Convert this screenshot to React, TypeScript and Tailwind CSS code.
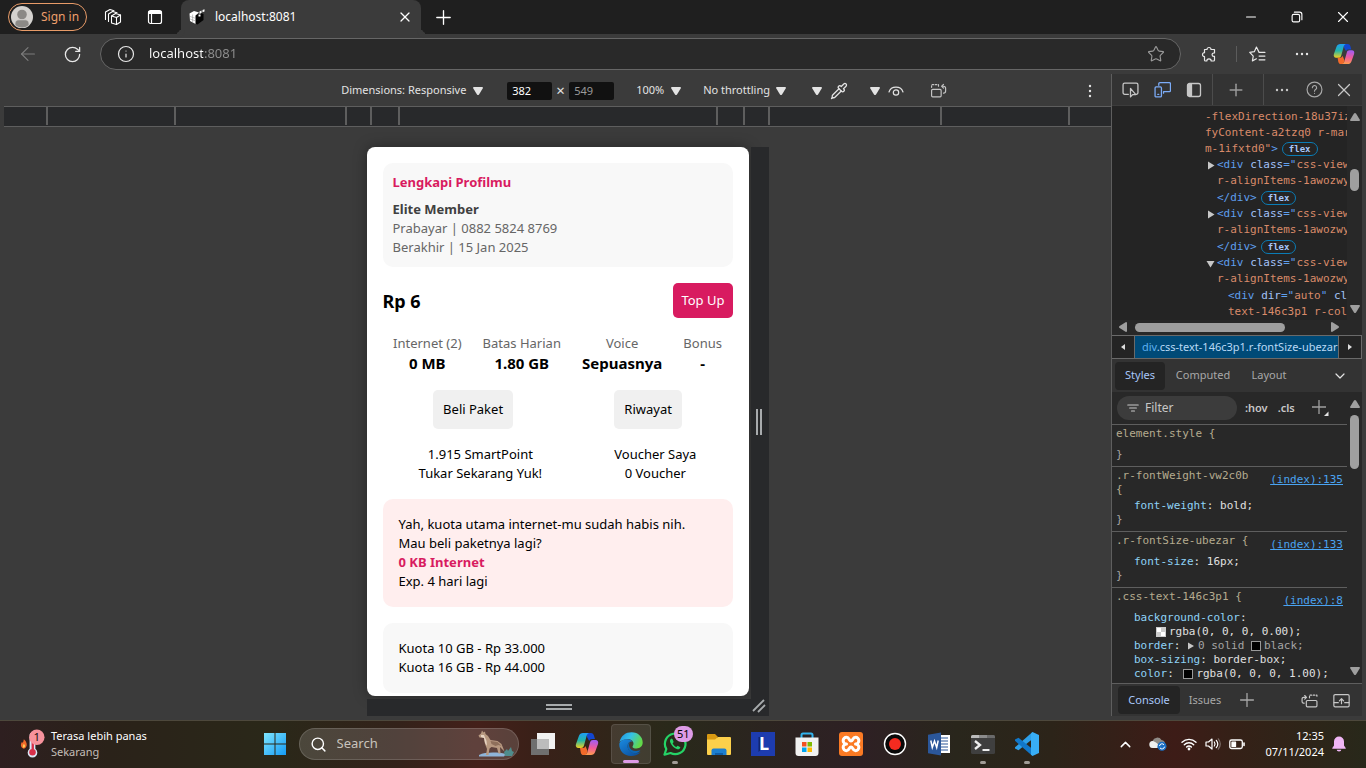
import type { ReactNode } from "react";
import { ArrowLeft, ChevronDown, ChevronUp, Info, Pipette, Plus, RotateCw, Search, Star, X } from "lucide-react";

type IconProps = { className?: string };

function Stroke({ children, className = "size-4", width = 1.2 }: { children: ReactNode; className?: string; width?: number }) {
  return (
    <svg viewBox="0 0 16 16" className={className} fill="none" stroke="currentColor" strokeWidth={width} strokeLinecap="round" strokeLinejoin="round" aria-hidden="true">
      {children}
    </svg>
  );
}

function Triangle({ className = "" }: IconProps) {
  return (
    <svg viewBox="0 0 10 8" className={`h-2 w-[10px] shrink-0 ${className}`} fill="currentColor" aria-hidden="true">
      <path d="M0 1Q0 0 1 0h8q1 0 1 1L6 7.400Q5 8.600 4 7.400Z" />
    </svg>
  );
}

function Dots({ className = "" }: IconProps) {
  return (
    <svg viewBox="0 0 16 16" className={`size-4 ${className}`} fill="currentColor" aria-hidden="true">
      <circle cx="3" cy="8" r="1.200" />
      <circle cx="8" cy="8" r="1.200" />
      <circle cx="13" cy="8" r="1.200" />
    </svg>
  );
}

function IconButton({ label, className = "", children }: { label: string; className?: string; children: ReactNode }) {
  return (
    <button type="button" aria-label={label} className={`flex shrink-0 items-center justify-center ${className}`}>
      {children}
    </button>
  );
}

function Copilot({ id, className = "size-6" }: { id: string; className?: string }) {
  return (
    <svg viewBox="0 0 24 24" className={className} aria-hidden="true">
      <defs>
        <linearGradient id={`${id}-a`} x1="0" y1="0" x2="0" y2="1">
          <stop offset="0" stopColor="#1f9df5" />
          <stop offset="0.500" stopColor="#23b6a8" />
          <stop offset="1" stopColor="#f0d020" />
        </linearGradient>
        <linearGradient id={`${id}-b`} x1="0.300" y1="0" x2="0.200" y2="1">
          <stop offset="0" stopColor="#a45cf0" />
          <stop offset="0.500" stopColor="#f05a9a" />
          <stop offset="1" stopColor="#ffa04a" />
        </linearGradient>
      </defs>
      <path d="M12 1h4c1.600 0 2.500 1 2.900 2.400L20 7h-3c-1.500 0-2.300.700-2.800 2.100L12 5Z" fill="#1246d0" />
      <path d="M8 1h6c-1.300.500-1.900 1.400-2.400 3L9 13.500C8.500 15.200 7.600 16 6 16H3.500C1.200 16 .300 14.300 1 12L3.800 4.200C4.600 2 6 1 8 1Z" fill={`url(#${id}-a)`} />
      <path d="M5 16h3c1.500 0 2-.800 2.500-2l2 5-1.200 4H8.500c-1.400 0-2.300-.900-2.700-2.300Z" fill="#f26a2a" />
      <path d="M16 23h-6c1.300-.500 2-1.400 2.400-3L15 10.500C15.500 8.800 16.400 8 18 8h2.500c2.300 0 3.200 1.700 2.500 4l-2.800 7.800C19.400 22 18 23 16 23Z" fill={`url(#${id}-b)`} />
    </svg>
  );
}

function ExpoCube() {
  return (
    <svg viewBox="0 0 16 16" className="size-4" aria-hidden="true">
      <path d="M5.500 6.500 12 4l2.500 1v6l-6 4.500-3-1Z" fill="#050505" />
      <path d="M.500 4.500 5 2l5 1.500-3.500 3v8.500L1 12Z" fill="#fff" />
      <path d="M1 7.500l5.500 1.800M1 10l5.500 1.900M3.600 5.500v8" stroke="#8a8a8a" strokeWidth="0.500" />
      <path d="M10.500 2.500 12.500 1.500v2.500L10.500 5ZM13.500 1l2-.700v2.200l-2 .700ZM9.500 5.500h2v2h-2Z" fill="#fff" />
    </svg>
  );
}

function TitleBar() {
  return (
    <header className="flex h-[34px] shrink-0 items-stretch bg-[#1f1f1f] pl-2 text-white">
      <button type="button" className="flex h-7 w-[79px] shrink-0 items-center gap-2 self-center rounded-full border border-[#e89b68] pl-[2px] text-[12px] text-[#ee9f6c]">
        <svg viewBox="0 0 22 22" className="size-[22px]" aria-hidden="true">
          <circle cx="11" cy="11" r="11" fill="#d4d2cf" />
          <circle cx="11" cy="8.500" r="4.800" fill="#8b8986" />
          <path d="M4 19.400C3.500 15 6 13.800 8 13.800h6c2 0 4.500 1.200 4 5.600a11 11 0 0 1-14 0Z" fill="#8b8986" stroke="#d4d2cf" strokeWidth="0.800" />
        </svg>
        Sign in
      </button>
      <IconButton label="Workspaces" className="ml-[5px] w-[42px]">
        <svg viewBox="0 0 18 18" className="size-[18px]" fill="none" stroke="currentColor" strokeWidth="1.100" strokeLinejoin="round" strokeLinecap="round" aria-hidden="true">
          <path d="m7.500 8 4-2.500 5 1.500v7l-4 2.500-5-1.500Z" />
          <path d="M7.500 8l5 1.500 4-2.500M12.500 9.500v7M4.500 13.500V6l4-2.500 4.500 1.300M1.500 11.500V4L6 1.500l4 1.200" />
        </svg>
      </IconButton>
      <IconButton label="Tab actions menu" className="w-[42px]">
        <svg viewBox="0 0 16 16" className="size-4" fill="none" stroke="currentColor" aria-hidden="true">
          <rect x="1.500" y="1.500" width="13" height="13" rx="2" strokeWidth="1.200" />
          <path d="M1.500 3.500h13" strokeWidth="3" />
          <path d="M4.500 4v10.500" strokeWidth="1.200" />
        </svg>
      </IconButton>
      <div className="relative ml-[5px] flex w-60 items-center rounded-t-lg bg-[#3b3b3b] px-2 text-[12px]">
        <span className="absolute bottom-0 -left-2 size-2 rounded-br-lg shadow-[4px_4px_0_0_#3b3b3b]" />
        <span className="absolute -right-2 bottom-0 size-2 rounded-bl-lg shadow-[-4px_4px_0_0_#3b3b3b]" />
        <ExpoCube />
        <span className="ml-[10px] flex-1">localhost:8081</span>
        <IconButton label="Close tab" className="size-4">
          <X size={16} strokeWidth={1.8} />
        </IconButton>
      </div>
      <IconButton label="New tab" className="w-11">
        <Plus size={23} strokeWidth={1.4} />
      </IconButton>
      <div className="flex-1" />
      <IconButton label="Minimize" className="w-[46px]">
        <Stroke className="size-3" width={1.4}><path d="M2 8h12" /></Stroke>
      </IconButton>
      <IconButton label="Restore" className="w-[46px]">
        <Stroke className="size-3" width={1.5}>
          <rect x="1.500" y="4.500" width="10" height="10" rx="2" />
          <path d="M4.500 1.500h7a3 3 0 0 1 3 3v7" />
        </Stroke>
      </IconButton>
      <IconButton label="Close window" className="w-[46px]">
        <Stroke className="size-3" width={1.5}><path d="m2 2 12 12M14 2 2 14" /></Stroke>
      </IconButton>
    </header>
  );
}

function AddressRow() {
  return (
    <div className="flex h-10 shrink-0 items-center bg-[#3b3b3b] pl-[6px] text-[#e8e8e8]">
      <IconButton label="Back" className="w-11 text-[#7d7d7d]">
        <ArrowLeft size={22} strokeWidth={1.2} />
      </IconButton>
      <IconButton label="Refresh" className="w-11">
        <RotateCw size={19} strokeWidth={1.6} />
      </IconButton>
      <div className="ml-[6px] flex h-8 flex-1 items-center rounded-full border border-[#666] bg-[#292929] pr-[15px] pl-4">
        <Info size={18} strokeWidth={1.6} />
        <input
          aria-label="Address"
          defaultValue="localhost:8081"
          className="ml-[14px] min-w-0 flex-1 bg-[linear-gradient(90deg,#ffffff_54px,#8f8f8f_54px)] bg-clip-text text-[13px] text-transparent outline-none"
        />
        <IconButton label="Add to favorites" className="text-[#9a9a9a]">
          <Star size={18} strokeWidth={1.5} />
        </IconButton>
      </div>
      <IconButton label="Extensions" className="ml-2 w-10">
        <Stroke className="size-4">
          <path d="M3.500 3.500H6a2 2 0 1 1 4 0h3.500V7h-.700a1.700 1.700 0 0 0 0 3.400h.700V14a1 1 0 0 1-1 1H10.200a2.200 2.200 0 0 0-4.400 0H4.500a1 1 0 0 1-1-1v-3.300a2 2 0 1 1 0-4Z" />
        </Stroke>
      </IconButton>
      <span className="mr-[5px] ml-[7px] h-4 w-px bg-[#5c5c5c]" />
      <IconButton label="Favorites" className="w-[30px]">
        <Stroke className="size-[17px]" width={1.1}>
          <path d="M9.500 6 7 1 5 5.300.700 6 4 9.500 3.200 14 7 12M9.500 6H15M9.500 9.500H15M9.500 13H15" />
        </Stroke>
      </IconButton>
      <IconButton label="Settings and more" className="w-[60px]"><Dots /></IconButton>
      <IconButton label="Copilot" className="mr-[10px] w-6"><Copilot id="bar" className="size-[22px]" /></IconButton>
    </div>
  );
}

function MiniSelect({ label, value }: { label: string; value: string }) {
  return (
    <label className="flex items-center gap-[6px]">
      <select aria-label={label} className="appearance-none bg-transparent text-[#e3e3e3] outline-none">
        <option>{value}</option>
      </select>
      <Triangle />
    </label>
  );
}

function DeviceToolbar() {
  return (
    <div className="flex h-[33px] shrink-0 items-center border-b border-[#5e5e5e] pt-px text-[11px] text-[#e3e3e3]">
      <div className="flex-5" />
      <MiniSelect label="Device" value="Dimensions: Responsive" />
      <input aria-label="Width" defaultValue="382" className="ml-6 h-[18px] w-[45px] rounded-xs bg-[#111] px-[5px] text-white outline-none" />
      <span className="w-[17px] text-center text-[15px]">×</span>
      <input aria-label="Height" defaultValue="549" className="h-[18px] w-[45px] rounded-xs bg-[#111] px-[5px] text-[#9a9a9a] outline-none" />
      <div className="ml-[22px] flex items-center gap-[22px]">
        <MiniSelect label="Zoom" value="100%" />
        <MiniSelect label="Throttling" value="No throttling" />
      </div>
      <button type="button" aria-label="Color format" className="ml-[26px] flex items-center gap-2">
        <Triangle />
        <Pipette size={18} strokeWidth={1.7} />
      </button>
      <button type="button" aria-label="Vision deficiencies" className="ml-[22px] flex items-center gap-2">
        <Triangle />
        <Stroke className="size-4">
          <path d="M1 9c2-6.500 12-6.500 14 0" />
          <circle cx="8" cy="9.500" r="2.700" />
        </Stroke>
      </button>
      <IconButton label="Rotate" className="ml-[26px] text-[#c4c4c4]">
        <Stroke className="size-[17px]" width={1.1}>
          <rect x="1.500" y="7" width="9" height="7" rx="1" />
          <path d="M1.500 5V2.500H8V5" strokeDasharray="1.500 1.500" />
          <path d="M12.500 4h.200a2 2 0 0 1 2 2v2.500a2 2 0 0 1-2 2M12.700 2.300 11 4l1.700 1.700" />
        </Stroke>
      </IconButton>
      <div className="flex-2" />
      <IconButton label="More options" className="mr-[13px]"><Dots className="rotate-90" /></IconButton>
    </div>
  );
}

function Ruler() {
  return (
    <div className="flex h-5 shrink-0 justify-center overflow-hidden border-b border-[#5e5e5e] bg-[#28292b] pb-px *:shrink-0 *:border-l-2 *:border-[#5e5e5e]">
      <div className="w-32" />
      <div className="w-[171px]" />
      <div className="w-[25px]" />
      <div className="w-7" />
      <div className="w-[318px]" />
      <div className="w-[27px]" />
      <div className="w-[25px]" />
      <div className="w-[172px]" />
      <div className="w-[130px] border-r-2" />
    </div>
  );
}

function Stat({ label, value }: { label: string; value: string }) {
  return (
    <div className="text-center">
      <p className="text-[#666]">{label}</p>
      <p className="text-[15px] leading-[21px] font-bold">{value}</p>
    </div>
  );
}

function PhonePage() {
  return (
    <main className="h-[549px] overflow-hidden rounded-lg bg-white p-4 text-[13px] leading-[19px] text-black shadow-[0_0_14px_rgba(0,0,0,0.35)]">
      <section className="rounded-[10px] bg-[#f8f8f8] p-[10px] text-[#666]">
        <h1 className="mb-2 font-bold text-[#d81b60]">Lengkapi Profilmu</h1>
        <p className="font-bold text-[#404040]">Elite Member</p>
        <p>Prabayar | 0882 5824 8769</p>
        <p>Berakhir | 15 Jan 2025</p>
      </section>
      <section className="mt-4 flex items-center justify-between">
        <p className="text-[18px] leading-6 font-bold">Rp 6</p>
        <button type="button" className="rounded-[5px] bg-[#d81b60] p-2 text-white">Top Up</button>
      </section>
      <section className="mt-4 flex justify-around">
        <Stat label="Internet (2)" value="0 MB" />
        <Stat label="Batas Harian" value="1.80 GB" />
        <Stat label="Voice" value="Sepuasnya" />
        <Stat label="Bonus" value="-" />
      </section>
      <section className="mt-4 flex justify-around">
        <button type="button" className="rounded-[5px] bg-[#f0f0f0] p-[10px]">Beli Paket</button>
        <button type="button" className="rounded-[5px] bg-[#f0f0f0] p-[10px]">Riwayat</button>
      </section>
      <section className="mt-4 flex justify-around text-center">
        <p>1.915 SmartPoint<br />Tukar Sekarang Yuk!</p>
        <p>Voucher Saya<br />0 Voucher</p>
      </section>
      <section className="mt-4 rounded-[10px] bg-[#ffeeee] p-4">
        <p>Yah, kuota utama internet-mu sudah habis nih.</p>
        <p>Mau beli paketnya lagi?</p>
        <p className="font-bold text-[#d81b60]">0 KB Internet</p>
        <p>Exp. 4 hari lagi</p>
      </section>
      <section className="mt-4 rounded-[10px] bg-[#f8f8f8] p-4">
        <p>Kuota 10 GB - Rp 33.000</p>
        <p>Kuota 16 GB - Rp 44.000</p>
      </section>
    </main>
  );
}

function DeviceStage() {
  return (
    <div className="grid min-h-0 flex-1 grid-cols-[382px_20px] grid-rows-[549px_20px] content-start justify-center overflow-hidden pt-5 pl-5">
      <PhonePage />
      <div className="row-span-2 ml-[2px] flex flex-col items-center justify-between bg-[#28292b] pt-[262px] pr-[2px] pb-[3px] text-[#a8abad]">
        <span className="h-[26px] w-[6px] border-x-2 border-current" />
        <svg viewBox="0 0 14 14" className="size-[14px]" stroke="currentColor" strokeWidth="1.800" aria-hidden="true">
          <path d="M1 12 12 1M6 13l7-7" />
        </svg>
      </div>
      <div className="mt-[3px] -mr-[2px] flex items-center justify-center bg-[#28292b] pb-[2px] text-[#a8abad]">
        <span className="h-[6px] w-[26px] border-y-2 border-current" />
      </div>
    </div>
  );
}

const T = ({ children }: { children: ReactNode }) => <span className="text-[#5f9fee]">{children}</span>;
const A = ({ children }: { children: ReactNode }) => <span className="text-[#a3c2f7]">{children}</span>;
const V = ({ children }: { children: ReactNode }) => <span className="text-[#d98b6a]">{children}</span>;

function FlexBadge() {
  return <span className="ml-1 rounded-full border border-[#0a7cb5] px-[6px] text-[9px] leading-[12px] font-bold text-[#a8c7fa]">flex</span>;
}

function DomNode({ open = false }: { open?: boolean }) {
  return (
    <>
      <div className="flex h-4 items-center gap-[2px] pl-[94px]">
        <svg viewBox="0 0 9 9" className={`size-[9px] shrink-0 text-[#c7c7c7] ${open ? "rotate-90" : ""}`} fill="currentColor" aria-hidden="true">
          <path d="M2 0.500 8.500 4.500 2 8.500Z" />
        </svg>
        <span><T>&lt;div</T> <A>class</A><T>="</T><V>css-view-175oi2r</V></span>
      </div>
      <div className="h-[17px] pl-[105px]"><V>r-alignItems-1awozwy</V></div>
    </>
  );
}

function ElementsTree() {
  return (
    <div className="flex h-[214px] shrink-0 bg-[#242424] font-['DejaVu_Sans_Mono',monospace] text-[11px] leading-4">
      <div className="min-w-0 flex-1 overflow-hidden pt-[3px] whitespace-pre">
        <div className="pl-[93px]">
          <div><V>-flexDirection-18u37iz</V></div>
          <div><V>fyContent-a2tzq0 r-marginBotto</V></div>
          <div className="flex h-4 items-center"><V>m-1ifxtd0"</V><T>&gt;</T><FlexBadge /></div>
        </div>
        <DomNode />
        <div className="flex h-4 items-center pl-[105px]"><T>&lt;/div&gt;</T><FlexBadge /></div>
        <DomNode />
        <div className="flex h-4 items-center pl-[105px]"><T>&lt;/div&gt;</T><FlexBadge /></div>
        <DomNode open />
        <div className="pl-[116px]"><T>&lt;div</T> <A>dir</A><T>="</T><V>auto</V><T>"</T> <A>class</A></div>
        <div className="pl-[116px]"><V>text-146c3p1 r-color</V></div>
      </div>
      <div className="flex w-[15px] flex-col items-center bg-[#282828] py-[7px] text-[#9f9f9f]">
        <Triangle className="rotate-180" />
        <span className="mt-12 h-[22px] w-[9px] rounded-full bg-current" />
        <Triangle className="mt-auto" />
      </div>
    </div>
  );
}

function DevToolsBar() {
  return (
    <div className="flex h-8 shrink-0 items-stretch border-b border-[#3c3c3c] bg-[#333] pl-[2px] text-[#c7c7c7]">
      <IconButton label="Inspect element" className="w-8">
        <Stroke className="size-[17px]" width={1.2}>
          <path d="M6 12.500H2.500a1.500 1.500 0 0 1-1.500-1.500V3.500A1.500 1.500 0 0 1 2.500 2h11A1.500 1.500 0 0 1 15 3.500V11a1.500 1.500 0 0 1-1.500 1.500" />
          <path d="M8 7v8l2-2.200h3Z" />
        </Stroke>
      </IconButton>
      <IconButton label="Device emulation" className="w-8 text-[#7cacf8]">
        <Stroke className="size-[17px]" width={1.2}>
          <path d="M4.500 4V2.500A1 1 0 0 1 5.500 1.500h9a1 1 0 0 1 1 1V9a1 1 0 0 1-1 1H9.500M9 10v1.500" />
          <rect x="1" y="5.500" width="6" height="9.500" rx="1" />
          <path d="M3.500 12.500h1" />
        </Stroke>
      </IconButton>
      <IconButton label="Toggle sidebar" className="w-8">
        <Stroke className="size-4" width={1.3}>
          <rect x="1.500" y="1.500" width="13" height="13" rx="2" />
          <path d="M2 2.500h3.500v11H2Z" fill="currentColor" />
        </Stroke>
      </IconButton>
      <IconButton label="More tools" className="ml-[2px] flex-1 border-x border-[#4c4c4c] pr-1 text-[#9a9a9a]">
        <Plus size={20} strokeWidth={1.8} />
      </IconButton>
      <IconButton label="Customize" className="w-9"><Dots /></IconButton>
      <IconButton label="Help" className="w-7 text-[#a8a8a8]">
        <Stroke className="size-[17px]" width={1.1}>
          <circle cx="8" cy="8" r="7" />
          <path d="M6 6.300a2 2 0 1 1 3 1.700c-.700.500-1 .900-1 1.600M8 11.500v.100" />
        </Stroke>
      </IconButton>
      <IconButton label="Close DevTools" className="mr-[2px] w-8"><X size={22} strokeWidth={1.3} /></IconButton>
    </div>
  );
}

function Breadcrumb() {
  return (
    <div className="flex h-6 shrink-0 border border-l-0 border-[#6a6a6a] text-[11px] whitespace-nowrap">
      <IconButton label="Scroll left" className="w-[23px] border-r border-[#6a6a6a] bg-[#242424] text-[#ddd]">
        <svg viewBox="0 0 6 6" className="size-[6px]" fill="currentColor"><path d="M5 0v6L1 3Z" /></svg>
      </IconButton>
      <div className="min-w-0 flex-1 overflow-hidden bg-[#004a77] pl-[7px] leading-[22px]">
        <span className="text-[#5db0f0]">div</span><span className="text-[#b9d9f5]">.css-text-146c3p1.r-fontSize-ubezar</span>
      </div>
      <IconButton label="Scroll right" className="w-[23px] border-l border-[#6a6a6a] bg-[#242424] text-[#ddd]">
        <svg viewBox="0 0 6 6" className="size-[6px]" fill="currentColor"><path d="M1 0v6L5 3Z" /></svg>
      </IconButton>
    </div>
  );
}

function Rule({ selector, link, tight = false, children }: { selector: ReactNode; link?: string; tight?: boolean; children?: ReactNode }) {
  return (
    <div className="border-b border-[#5e5e5e] pt-[2px] pr-1 pb-1 pl-1 text-[#a5a5a5]">
      <div className="flex justify-between">
        <div className="text-[#b5ab8f]">{selector}</div>
        {link && <a href="#source" className="mt-1 -mb-1 text-[#4aa3f0] underline">{link}</a>}
      </div>
      <div className={tight ? "pt-[2px] pl-[18px]" : "pt-[7px] pl-[18px]"}>{children}</div>
      <div>{"}"}</div>
    </div>
  );
}

const P = ({ children }: { children: ReactNode }) => <span className="text-[#8fd3f7]">{children}</span>;
const W = ({ children }: { children: ReactNode }) => <span className="text-[#e0e0e0]">{children}</span>;

function StylesPane() {
  return (
    <div className="flex min-h-0 flex-1 bg-[#282828]">
      <div className="flex min-w-0 flex-1 flex-col">
        <div className="flex h-[33px] shrink-0 items-center border-b border-[#5e5e5e] pl-[5px]">
          <label className="flex h-6 w-[120px] items-center gap-[6px] rounded-full bg-[#3c3c3c] pl-[10px] text-[#c7c7c7]">
            <Stroke className="size-3" width={1.5}><path d="M1 4h14M3.500 8h9M6 12h4" /></Stroke>
            <input aria-label="Filter styles" placeholder="Filter" className="w-20 bg-transparent text-[12px] outline-none placeholder:text-[#c7c7c7]" />
          </label>
          <button type="button" className="ml-2 text-[11px] font-semibold text-[#c7c7c7]">:hov</button>
          <button type="button" className="ml-[10px] text-[11px] font-semibold text-[#c7c7c7]">.cls</button>
          <IconButton label="New style rule" className="ml-4 text-[#9f9f9f]">
            <svg viewBox="0 0 18 18" className="size-[18px]" aria-hidden="true">
              <path d="M8 1v14M1 8h14" stroke="currentColor" strokeWidth="1.300" />
              <path d="M17.500 12.500V17h-4.500Z" fill="#e3e3e3" />
            </svg>
          </IconButton>
        </div>
        <div className="min-h-0 flex-1 overflow-hidden font-['DejaVu_Sans_Mono',monospace] text-[11px] leading-[14px] whitespace-pre">
          <Rule selector="element.style {" />
          <Rule selector={<>.r-fontWeight-vw2c0b<br />{"{"}</>} link="(index):135" tight><P>font-weight</P><W>: bold;</W></Rule>
          <Rule selector=".r-fontSize-ubezar {" link="(index):133"><P>font-size</P><W>: 16px;</W></Rule>
          <Rule selector=".css-text-146c3p1 {" link="(index):8">
            <div><P>background-color</P><W>:</W></div>
            <div className="flex items-center gap-[3px] pl-[22px]">
              <svg viewBox="0 0 10 10" className="size-[10px]" aria-hidden="true">
                <path d="M0 0h10v10H0Z" fill="#ccc" />
                <path d="M1 1h4v4H1ZM5 5h4v4H5Z" fill="#fff" />
              </svg>
              <W>rgba(0, 0, 0, 0.00);</W>
            </div>
            <div className="flex items-center"><P>border</P><W>: </W>
              <svg viewBox="0 0 8 8" className="mr-[3px] size-2" fill="#c7c7c7" aria-hidden="true"><path d="M1 0.500 7 4 1 7.500Z" /></svg>
              <span>0 solid </span><span className="mr-[3px] size-[10px] border border-[#999] bg-black" /><span>black;</span>
            </div>
            <div><P>box-sizing</P><W>: border-box;</W></div>
            <div className="flex items-center"><P>color</P><W>: </W><span className="mx-[3px] size-[10px] border border-[#999] bg-black" /><W>rgba(0, 0, 0, 1.00);</W></div>
            <div><P>display</P><W>: inline;</W></div>
          </Rule>
        </div>
      </div>
      <div className="flex w-[15px] flex-col items-center py-2 text-[#9f9f9f]">
        <Triangle className="rotate-180" />
        <span className="mt-[7px] h-[54px] w-[9px] rounded-full bg-current" />
        <Triangle className="mt-auto" />
      </div>
    </div>
  );
}

function DevTools() {
  return (
    <aside className="flex w-[251px] shrink-0 flex-col border-l border-[#5e5e5e] text-[#a8a8a8]">
      <DevToolsBar />
      <ElementsTree />
      <div className="flex h-[15px] shrink-0 items-center bg-[#282828] pr-[22px] pb-px pl-[6px] text-[#9f9f9f]">
        <Triangle className="rotate-90" />
        <span className="ml-[7px] h-[9px] w-[150px] rounded-full bg-current" />
        <Triangle className="ml-auto -rotate-90" />
      </div>
      <Breadcrumb />
      <nav className="flex h-[33px] shrink-0 items-center bg-[#333] pr-[14px] pl-[3px] text-[11px]">
        <button type="button" className="h-7 w-[50px] rounded-sm bg-[#242424] text-[#a8c7fa]">Styles</button>
        <button type="button" className="w-[76px]">Computed</button>
        <button type="button" className="w-14">Layout</button>
        <IconButton label="More tabs" className="ml-auto text-[#e3e3e3]"><ChevronDown size={16} strokeWidth={1.8} /></IconButton>
      </nav>
      <StylesPane />
      <nav className="flex h-[33px] shrink-0 items-center border-t border-[#5e5e5e] bg-[#333] pr-3 pl-[6px] text-[11px]">
        <button type="button" className="h-7 w-[62px] rounded-sm bg-[#242424] text-[#a8c7fa]">Console</button>
        <button type="button" className="w-[50px]">Issues</button>
        <IconButton label="More drawer tools" className="ml-[6px]"><Plus size={22} strokeWidth={1.4} /></IconButton>
        <IconButton label="Dock quick view" className="ml-auto text-[#c7c7c7]">
          <Stroke className="size-[17px]" width={1.1}>
            <rect x="5" y="8" width="10" height="6" rx="1" />
            <path d="M8 5.500V3h7v2.500" strokeDasharray="1.500 1.500" />
            <path d="M3 10.500H2A1.500 1.500 0 0 1 1 9V6.500A1.500 1.500 0 0 1 2.500 5H5M3.500 3.300 5.200 5 3.500 6.700" />
          </Stroke>
        </IconButton>
        <IconButton label="Expand quick view" className="ml-[15px] text-[#c7c7c7]">
          <Stroke className="size-[17px]" width={1.1}>
            <rect x="0.800" y="2.500" width="14.400" height="11.500" rx="1.200" />
            <path d="M1 10h4m6 0h4M8 11V6.500M6 8.300l2-2 2 2" />
          </Stroke>
        </IconButton>
      </nav>
    </aside>
  );
}

function App24({ label, state, children }: { label: string; state?: "open" | "active"; children: ReactNode }) {
  return (
    <button
      type="button"
      aria-label={label}
      className={`relative mx-[2px] flex size-10 shrink-0 items-center justify-center rounded ${state === "active" ? "border border-white/10 bg-white/10" : ""}`}
    >
      <svg viewBox="0 0 24 24" className="size-6" aria-hidden="true">{children}</svg>
      {state && <span className={`absolute bottom-0 h-[3px] rounded-full ${state === "active" ? "w-4 bg-[#dd9be6]" : "w-[6px] bg-[#a09c96]"}`} />}
    </button>
  );
}

function Wolf() {
  return (
    <svg viewBox="0 0 36 28" className="h-7 w-9 shrink-0" aria-hidden="true">
      <path d="M1 25c6-3 18-3 27-1l-2 2.500H1Z" fill="#8fb4d8" />
      <path d="M.500 5.500 3 3.500 4 .500 5.500 2.500 7 1.500 7.500 4 10 6l2.500 4 7 1 4 3 3 7.500L22 17l.500 6.500h-2L19 18l-5.500-1-2 1.500-1 6.500H8L9 19l-2-5L6 8 1.500 7.500Z" fill="#b79880" />
      <path d="M3 5 6 5l2.500 6 .500 5-2-3-1-5-3-1Z" fill="#e6d3c2" />
      <path d="M12.500 11l7 1 4 4-3-1-3 1-4-2Z" fill="#8e6f5b" />
      <path d="M26 22l3-3 1 2 3-4 1 4 2 1-2 4h-7Z" fill="#4f8c8c" />
    </svg>
  );
}

function Taskbar() {
  return (
    <footer className="flex h-12 shrink-0 items-center bg-[linear-gradient(90deg,#2e1f20_0%,#2a2219_8%,#2a2819_20%,#33221a_29%,#44201a_35%,#3a2018_39%,#29291a_49%,#2b2420_56%,#2e2024_63%,#29261c_70%,#2c2419_77%,#3d1c17_86%,#352017_90%,#28281a_100%)] pl-5 text-[11px] text-white shadow-[inset_0_1px_0_0_#4d483c]">
      <button type="button" className="flex w-[130px] shrink-0 items-center gap-[6px] text-left leading-4 whitespace-nowrap">
        <svg viewBox="0 0 26 30" className="h-[30px] w-[25px] shrink-0" aria-hidden="true">
          <path d="M4 20c-3-1-4-4-2-7 .500 1 1 1 1.500-.500L4 10c3 2 5 8 0 10Z" fill="#f06a2a" />
          <path d="M3.500 19c-1-1-.500-3 .500-4 1.500 1 2 3-.500 4Z" fill="#ffd25a" />
          <path d="M10 6a3 3 0 0 1 6 0v14a5 5 0 1 1-6 0Z" fill="#dbe8f7" />
          <path d="M12 10h2.500v11h-2.500Z" fill="#d8304a" />
          <circle cx="13" cy="23.500" r="3.400" fill="#d8304a" />
          <circle cx="17.500" cy="8" r="8" fill="#f7929c" />
          <text x="17.500" y="12" textAnchor="middle" fontSize="12" fill="#1a1010">1</text>
        </svg>
        <span>
          Terasa lebih panas
          <br />
          <span className="text-[#c4beb8]">Sekarang</span>
        </span>
      </button>
      <div className="flex-3" />
      <App24 label="Start">
        <defs>
          <linearGradient id="win" x1="0" y1="0" x2="1" y2="1"><stop offset="0" stopColor="#7fe6ff" /><stop offset="1" stopColor="#149bf5" /></linearGradient>
        </defs>
        <path d="M1 1h10.500v10.500H1ZM12.500 1H23v10.500H12.500ZM1 12.500h10.500V23H1ZM12.500 12.500H23V23H12.500Z" fill="url(#win)" />
      </App24>
      <label className="mx-[2px] flex h-8 w-[220px] shrink-0 items-center gap-[10px] rounded-full border border-white/15 bg-white/15 pr-1 pl-[10px]">
        <Search size={17} strokeWidth={2} />
        <input aria-label="Search" placeholder="Search" className="min-w-0 flex-1 bg-transparent text-[13px] outline-none placeholder:text-[#c8c3bd]" />
        <Wolf />
      </label>
      <App24 label="Task view">
        <path d="M6 1h18v16H6Z" fill="#f2f2f2" />
        <path d="M0 7h18v16H0Z" fill="#6f6f6f" />
        <path d="M6 7h12v10H6Z" fill="#bcbcbc" />
      </App24>
      <App24 label="Copilot"><Copilot id="task" /></App24>
      <App24 label="Microsoft Edge" state="active">
        <defs>
          <linearGradient id="edgeTop" x1="0" y1="0" x2="1" y2="0.400"><stop offset="0" stopColor="#1d8fe0" /><stop offset="0.500" stopColor="#35c1e8" /><stop offset="1" stopColor="#62d94a" /></linearGradient>
          <linearGradient id="edgeLow" x1="0" y1="0" x2="0.800" y2="1"><stop offset="0" stopColor="#1a8be0" /><stop offset="1" stopColor="#0b4f9e" /></linearGradient>
        </defs>
        <path d="M0.500 10C2 3.500 7 .300 12.500.300c7 0 11.200 5 11.200 10 0 4-2.700 6.200-6.200 6.200-2.500 0-4-.800-4-1.800 0-.800 1-1.200 1-3.200 0-2.300-2.200-4.300-5.500-4.300C4.500 7.200 1.500 9 .500 10Z" fill="url(#edgeTop)" />
        <path d="M.300 12c.300-3 4-4.800 7.500-4.800 3 0 5 1 6 2.500-3-.800-5.200 1.500-5.200 4.500 0 4.500 4.300 7 8.400 7 2 0 3.500-.500 4.700-1.200C19.500 22.500 16 24 12 24 5 24 0 18.500.300 12Z" fill="url(#edgeLow)" />
        <path d="M8.600 14.200c0-2 1-3.600 2.600-4.300-1 1.500-1.500 3-.700 5.300 1.200 3.200 5 4.800 10.900 3-2 2.800-4.500 3-5.400 3-4 0-7.400-3-7.400-7Z" fill="#0c66b5" />
      </App24>
      <div className="relative">
        <App24 label="WhatsApp" state="open">
          <path d="M1.500 22.700 3.300 17A10.300 10.300 0 1 1 7.500 21Z" fill="none" stroke="#25d366" strokeWidth="2.200" strokeLinejoin="round" />
          <path d="M8.500 6.500c-1.500.700-2 2.500-1 4.500 1.400 2.800 3.500 4.900 6.200 6 1.900.700 3.300-.100 3.700-1.800l-2.800-1.500-1.300 1.400c-1.700-.800-2.900-2-3.700-3.600l1-1.400-1-2.900Z" fill="#25d366" />
        </App24>
        <span className="absolute top-[2px] right-1 rounded-full bg-[#dd9be6] px-[3px] text-[11px] leading-4 text-black">51</span>
      </div>
      <App24 label="File Explorer">
        <path d="M0 3a1 1 0 0 1 1-1h7l2.500 2.500V9H0Z" fill="#d99a12" />
        <path d="M0 7.500h8l3-2.500h12a1 1 0 0 1 1 1v16a1 1 0 0 1-1 1H1a1 1 0 0 1-1-1Z" fill="#fcd04b" />
        <path d="M4.500 23v-4.500a2 2 0 0 1 2-2h11a2 2 0 0 1 2 2V23Z" fill="#1c7fd0" />
        <path d="M8 23v-2h8v2Z" fill="#0f5ea8" />
      </App24>
      <App24 label="L app">
        <path d="M0 0h24v24H0Z" fill="#1d3caf" />
        <path d="M7.500 5v15L10 17.500V5Z" fill="#102468" />
        <text x="8" y="18" fontSize="18" fontWeight="700" fill="#fff">L</text>
      </App24>
      <App24 label="Microsoft Store">
        <path d="M6.500 6V3a1.500 1.500 0 0 1 1.500-1.500h8A1.500 1.500 0 0 1 17.500 3v3" fill="none" stroke="#32b4ee" strokeWidth="2" />
        <path d="M.500 5.500h23V21a3 3 0 0 1-3 3h-17a3 3 0 0 1-3-3Z" fill="#f1f1f1" />
        <path d="M7 10h4.500v4.500H7Z" fill="#f25022" /><path d="M12.500 10H17v4.500h-4.500Z" fill="#7fba00" />
        <path d="M7 15.500h4.500V20H7Z" fill="#00a4ef" /><path d="M12.500 15.500H17V20h-4.500Z" fill="#ffb900" />
      </App24>
      <App24 label="XAMPP">
        <rect width="24" height="24" rx="3" fill="#fb7a24" />
        <path d="M7.500 12A3.200 3.200 0 0 1 7.500 5.300C10.500 5.300 10 9 12 9s1.500-3.700 4.500-3.700A3.200 3.200 0 0 1 16.500 12A3.200 3.200 0 0 1 16.500 18.700C13.500 18.700 14 15 12 15s-1.500 3.700-4.500 3.700A3.200 3.200 0 0 1 7.500 12Z" fill="none" stroke="#fff" strokeWidth="3" strokeLinejoin="round" />
      </App24>
      <App24 label="Screen recorder">
        <circle cx="12" cy="12" r="10.500" fill="#090909" stroke="#fff" strokeWidth="1.400" />
        <circle cx="12" cy="12" r="6" fill="#f52b20" />
      </App24>
      <App24 label="Microsoft Word">
        <path d="M12 3h11v18H12Z" fill="#fff" />
        <path d="M14 6h7M14 9h7M14 12h7M14 15h7M14 18h7" stroke="#2b579a" strokeWidth="1.100" />
        <path d="M1 2.800 14 .500v23L1 21.200Z" fill="#2b579a" />
        <path d="m3.800 8.500 1.500 7L7.500 9l2.200 6.500 1.500-7" fill="none" stroke="#fff" strokeWidth="1.500" />
      </App24>
      <App24 label="Terminal" state="open">
        <rect y="3" width="24" height="19" rx="1.500" fill="#3f3f3f" />
        <path d="M1.500 3H8v3H0V4.500A1.500 1.500 0 0 1 1.500 3Z" fill="#bbb" />
        <path d="M8 3h8v3H8Z" fill="#8b8b8b" /><path d="M16 3h6.500A1.500 1.500 0 0 1 24 4.500V6h-8Z" fill="#6a6a6a" />
        <path d="m4 9 5 4-5 4" fill="none" stroke="#eee" strokeWidth="2.300" />
        <path d="M11.500 18h7" stroke="#eee" strokeWidth="2" />
      </App24>
      <App24 label="Visual Studio Code" state="open">
        <path d="M17.500 0v7L3.500 18.200 0 16.600v-1.300Z" fill="#2d9fe8" />
        <path d="M17.500 24v-7L3.500 5.800 0 7.500v1.300Z" fill="#1177c9" />
        <path d="M17.500 0 24 3v18l-6.500 3-1.500-1.500V1.500Z" fill="#38aef5" />
      </App24>
      <div className="flex-2" />
      <IconButton label="Show hidden icons" className="mr-[15px]"><ChevronUp size={17} strokeWidth={2} /></IconButton>
      <IconButton label="OneDrive">
        <svg viewBox="0 0 18 14" className="h-[14px] w-[18px]" aria-hidden="true">
          <path d="M4 11a3.500 3.500 0 0 1-.500-7A5 5 0 0 1 12.500 3 4 4 0 0 1 16 7v4Z" fill="#8f8c88" />
          <path d="M4 11a3.500 3.500 0 0 1 0-7q3 1 6 4l-2 3Z" fill="#f0f0f0" />
          <circle cx="13" cy="9.300" r="4.500" fill="#1b6fc4" />
          <path d="M10.500 9a2.500 2.500 0 0 1 4.500-1.200M15.500 9.700a2.500 2.500 0 0 1-4.500 1.200" stroke="#fff" strokeWidth="1" fill="none" />
        </svg>
      </IconButton>
      <button type="button" aria-label="Network, volume and battery" className="ml-[14px] flex shrink-0 items-center gap-2">
        <Stroke className="size-4" width={1.4}>
          <path d="M1 6.200a10 10 0 0 1 14 0M3.300 8.700a6.700 6.700 0 0 1 9.400 0M5.600 11.100a3.400 3.400 0 0 1 4.800 0" />
          <circle cx="8" cy="13" r="0.700" fill="currentColor" />
        </Stroke>
        <Stroke className="size-4" width={1.2}>
          <path d="M1 6v4h2.500L7 13V3L3.500 6ZM9.300 6q1.500 2 0 4M11.300 4.300q3 3.700 0 7.400" />
          <path d="M13.300 2.800q4 5.200 0 10.400" opacity="0.350" />
        </Stroke>
        <Stroke className="size-4" width={1.3}>
          <rect x="0.800" y="4" width="12.500" height="8.500" rx="1.800" />
          <path d="M3 6.200h3.500v4.200H3Z" fill="currentColor" /><path d="M15 7v2.500" strokeWidth="1.600" />
        </Stroke>
      </button>
      <div className="ml-2 w-[71px] text-right leading-4 whitespace-nowrap">12:35<br />07/11/2024</div>
      <IconButton label="Notifications" className="mr-5 ml-2">
        <svg viewBox="0 0 14 16" className="h-4 w-[14px]" fill="#f0b6f5" aria-hidden="true">
          <path d="M7 .500A5 5 0 0 1 12 5.500V9.500l1.700 2.600v.700H.300v-.700L2 9.500v-4A5 5 0 0 1 7 .500ZM4.700 13.800h4.600a2.300 1.700 0 0 1-4.600 0Z" />
        </svg>
      </IconButton>
    </footer>
  );
}

export default function App() {
  return (
    <div className="flex h-screen flex-col overflow-hidden bg-[#3b3b3b] font-['Noto_Sans',sans-serif]">
      <TitleBar />
      <AddressRow />
      <div className="flex min-h-0 flex-1 px-1 pb-1">
        <div className="flex min-w-0 flex-1 flex-col">
          <DeviceToolbar />
          <Ruler />
          <DeviceStage />
        </div>
        <DevTools />
      </div>
      <Taskbar />
    </div>
  );
}
